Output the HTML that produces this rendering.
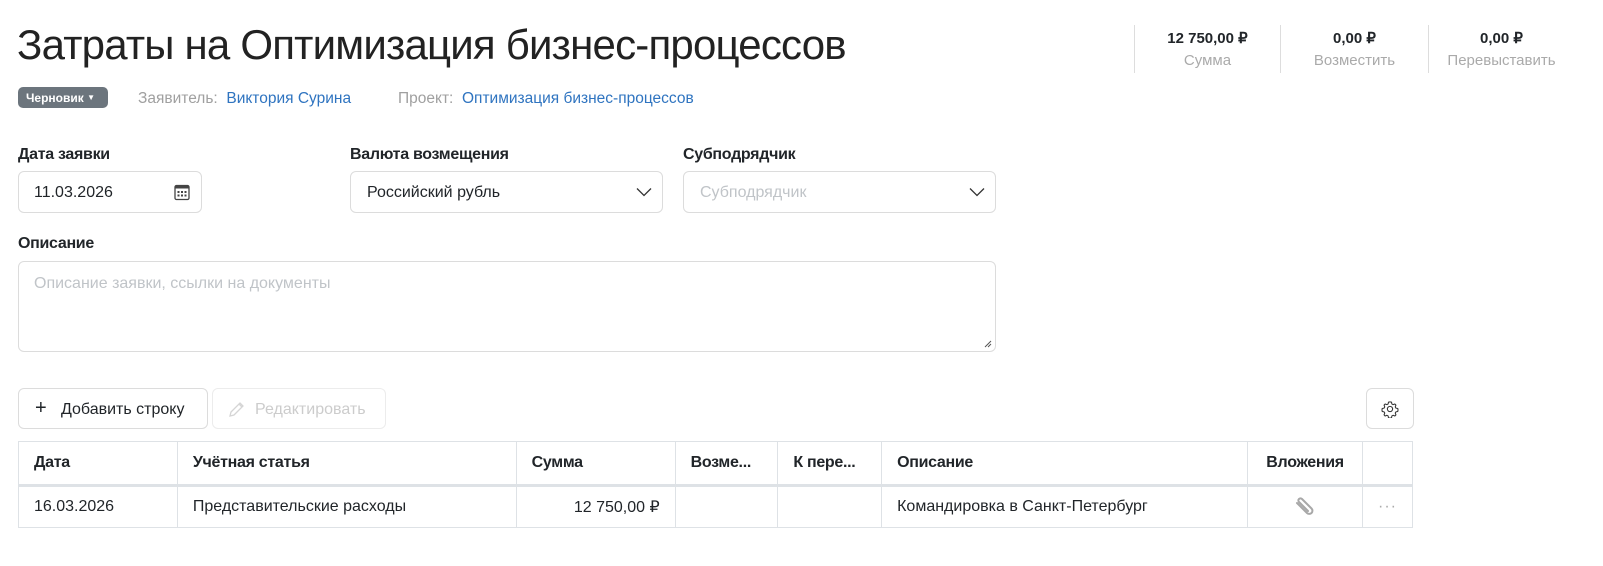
<!DOCTYPE html>
<html><head><meta charset="utf-8"><style>
*{box-sizing:border-box;margin:0;padding:0}
body{width:1603px;height:566px;background:#fff;font-family:"Liberation Sans",Arial,sans-serif;color:#212529;position:relative;overflow:hidden;font-size:16px}
.a{position:absolute;white-space:nowrap}
.title{left:17px;top:21px;font-size:42px;color:#222;letter-spacing:-0.8px;font-weight:300}
.badge{left:18px;top:87px;width:90px;height:21px;background:#6c757d;border-radius:5px;color:#fff;font-size:12px;font-weight:bold;padding:4px 0 0 8px}
.gray{color:#a0a0a0}
.blue{color:#2f74c0}
.lbl{font-weight:bold;font-size:16px;letter-spacing:-0.3px}
.inp{position:absolute;border:1px solid #dcdcdc;border-radius:6px;background:#fff}
.stat{position:absolute;top:25px;height:48px;border-left:1px solid #ddd;text-align:center}
.stat b{display:block;font-size:15px;margin-top:4px}
.stat span{display:block;color:#aaa;font-size:15px;margin-top:5px}
.btn{position:absolute;border:1px solid #dcdcdc;border-radius:6px;height:41px;top:388px}
table{position:absolute;left:18px;top:441px;border-collapse:collapse;width:1395px}
td,th{border:1px solid #dee2e6;height:44px;padding:0 15px;text-align:left;font-size:16px;white-space:nowrap}
th{font-weight:bold;border-bottom:3px solid #dee2e6;letter-spacing:-0.3px}
td{height:42px}
</style></head><body>
<div class="a title">Затраты на Оптимизация бизнес-процессов</div>
<div class="a badge">Черновик <span style="font-size:8px;vertical-align:2px">▼</span></div>
<div class="a" style="left:138px;top:90px;font-size:15.5px"><span class="gray">Заявитель:</span>&nbsp; <span class="blue">Виктория Сурина</span></div>
<div class="a" style="left:398px;top:90px;font-size:15.5px"><span class="gray">Проект:</span>&nbsp; <span class="blue">Оптимизация бизнес-процессов</span></div>

<div class="stat" style="left:1134px;width:146px"><b>12 750,00 ₽</b><span>Сумма</span></div>
<div class="stat" style="left:1280px;width:148px"><b>0,00 ₽</b><span>Возместить</span></div>
<div class="stat" style="left:1428px;width:146px"><b>0,00 ₽</b><span>Перевыставить</span></div>

<div class="a lbl" style="left:18px;top:146px">Дата заявки</div>
<div class="a lbl" style="left:350px;top:146px">Валюта возмещения</div>
<div class="a lbl" style="left:683px;top:146px">Субподрядчик</div>
<div class="inp" style="left:18px;top:171px;width:184px;height:42px"><span class="a" style="left:15px;top:12px">11.03.2026</span>
<svg class="a" style="left:155px;top:12px" width="16" height="17" viewBox="0 0 16 17"><rect x="1" y="1.5" width="14" height="14" rx="1.5" fill="none" stroke="#444" stroke-width="1.3"/><rect x="1" y="1.5" width="14" height="3" fill="#444"/><g fill="#444"><rect x="3.5" y="7" width="2" height="2"/><rect x="7" y="7" width="2" height="2"/><rect x="10.5" y="7" width="2" height="2"/><rect x="3.5" y="10.5" width="2" height="2"/><rect x="7" y="10.5" width="2" height="2"/><rect x="10.5" y="10.5" width="2" height="2"/></g></svg></div>
<div class="inp" style="left:350px;top:171px;width:313px;height:42px"><span class="a" style="left:16px;top:12px">Российский рубль</span>
<svg class="a" style="left:285px;top:15px" width="16" height="10"><path d="M1 1.5l7 7 7-7" fill="none" stroke="#333" stroke-width="1.3"/></svg></div>
<div class="inp" style="left:683px;top:171px;width:313px;height:42px"><span class="a" style="left:16px;top:12px;color:#c0c4c8">Субподрядчик</span>
<svg class="a" style="left:285px;top:15px" width="16" height="10"><path d="M1 1.5l7 7 7-7" fill="none" stroke="#333" stroke-width="1.3"/></svg></div>

<div class="a lbl" style="left:18px;top:235px">Описание</div>
<div class="inp" style="left:18px;top:261px;width:978px;height:91px"><span class="a" style="left:15px;top:13px;color:#c0c4c8">Описание заявки, ссылки на документы</span>
<svg class="a" style="right:3px;bottom:3px" width="8" height="8"><path d="M7 1L1 7M7 4L4 7" stroke="#555" stroke-width="1"/></svg></div>

<div class="btn" style="left:18px;width:190px"><span class="a" style="left:16px;top:8px;font-size:20px;font-weight:300">+</span><span class="a" style="left:42px;top:12px">Добавить строку</span></div>
<div class="btn" style="left:212px;width:174px;border-color:#ececec"><svg class="a" style="left:15px;top:12px" width="17" height="17"><path d="M2 15l1-4 9-9 3 3-9 9z M11 3l3 3" fill="none" stroke="#d5d5d5" stroke-width="1.3"/></svg><span class="a" style="left:42px;top:12px;color:#ccc">Редактировать</span></div>
<div class="btn" style="left:1366px;width:48px"><svg class="a" style="left:14px;top:11px" width="18" height="18" viewBox="0 0 24 24"><path d="M12 2.5l2 .3.5 2.5 1.6.9 2.4-.9 1.4 1.5-.9 2.4.9 1.6 2.5.5.3 2-.3 2-2.5.5-.9 1.6.9 2.4-1.4 1.5-2.4-.9-1.6.9-.5 2.5-2 .3-2-.3-.5-2.5-1.6-.9-2.4.9-1.4-1.5.9-2.4-.9-1.6-2.5-.5-.3-2 .3-2 2.5-.5.9-1.6-.9-2.4 1.4-1.5 2.4.9 1.6-.9.5-2.5z" fill="none" stroke="#333" stroke-width="1.4" stroke-linejoin="round"/><circle cx="12" cy="12" r="3.5" fill="none" stroke="#333" stroke-width="1.4"/></svg></div>

<table>
<tr><th style="width:160px">Дата</th><th style="width:341px">Учётная статья</th><th style="width:160px">Сумма</th><th style="width:103px">Возме...</th><th style="width:104px">К пере...</th><th style="width:368px">Описание</th><th style="width:115px;text-align:center">Вложения</th><th></th></tr>
<tr><td>16.03.2026</td><td>Представительские расходы</td><td style="text-align:right">12 750,00 ₽</td><td></td><td></td><td>Командировка в Санкт-Петербург</td><td style="text-align:center"><svg width="22" height="20" viewBox="0 0 22 20" style="vertical-align:middle"><path d="M3 6l10 10a3 3 0 0 0 4.5-4.5L8 2a2 2 0 0 0-3 3l9 9" fill="none" stroke="#a8a8a8" stroke-width="2" stroke-linecap="round"/></svg></td><td style="text-align:center;color:#aaa;letter-spacing:1px">···</td></tr>
</table>
</body></html>
